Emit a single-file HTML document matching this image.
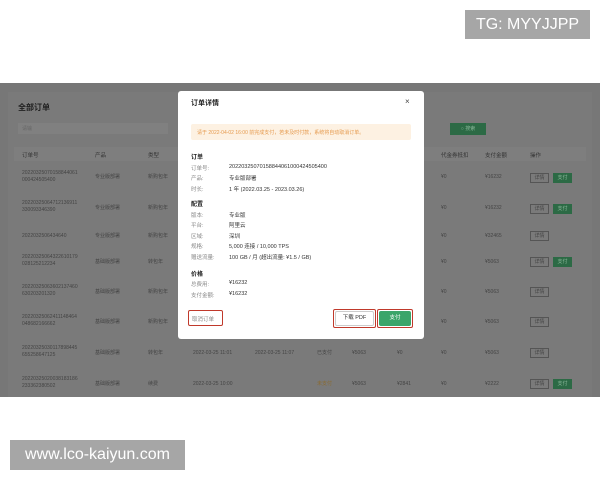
<!DOCTYPE html>
<html><head><meta charset="utf-8"><style>
*{margin:0;padding:0;box-sizing:border-box}
body{width:600px;height:480px;background:#fff;position:relative;overflow:hidden;font-family:"Liberation Sans","Noto Sans CJK SC",sans-serif}
.a{position:absolute;white-space:nowrap}
#bg{position:absolute;left:0;top:83px;width:600px;height:314px;background:#777}
#card{position:absolute;left:8px;top:92px;width:584px;height:305px;background:#7a7a7a}
.t{font-size:5px;color:#444;line-height:7px}
.h{font-size:5.5px;color:#333}
.btn{position:absolute;font-size:5px;height:10px;line-height:8px;text-align:center;border:1px solid #555;color:#444}
.pay{background:#2c6a45;border-color:#2c6a45;color:#8ab79a}
#m{position:absolute;left:178px;top:91px;width:246px;height:248px;background:#fff;border-radius:3px}
.l{font-size:5.5px;color:#888}
.v{font-size:5.5px;color:#333}
.s{font-size:6px;color:#222;font-weight:bold}
.red{position:absolute;border:1.5px solid #c0392b;border-radius:2px}
</style></head><body>
<div class="a" style="left:465px;top:10px;width:125px;height:29px;background:#a6a6a6;color:#fff;font-size:16px;line-height:29px;text-align:center">TG: MYYJJPP</div>
<div class="a" style="left:10px;top:440px;width:175px;height:30px;background:#a6a6a6;color:#fff;font-size:16px;line-height:30px;text-align:center">www.lco-kaiyun.com</div>
<div id="bg"></div><div id="card"></div>
<div class="a" style="left:18px;top:102px;font-size:8px;font-weight:bold;color:#222">全部订单</div>
<div class="a" style="left:18px;top:123px;width:150px;height:11px;background:#808080"></div>
<div class="a t" style="left:22px;top:126px;color:#666">请输</div>
<div class="a" style="left:450px;top:123px;width:36px;height:12px;background:#2c6a45;color:#8ab79a;font-size:5px;line-height:12px;text-align:center">○ 搜索</div>
<div class="a" style="left:14px;top:147px;width:572px;height:14px;background:#7e7e7e"></div>
<div class="a h" style="left:22px;top:151px">订单号</div>
<div class="a h" style="left:95px;top:151px">产品</div>
<div class="a h" style="left:148px;top:151px">类型</div>
<div class="a h" style="left:441px;top:151px">代金券抵扣</div>
<div class="a h" style="left:485px;top:151px">支付金额</div>
<div class="a h" style="left:530px;top:151px">操作</div>

<div class="a t" style="left:22px;top:170px">20220325070158844061<br>000424505400</div><div class="a t" style="left:95px;top:174px">专业版部署</div><div class="a t" style="left:148px;top:174px">新购包年</div><div class="a t" style="left:441px;top:174px">¥0</div><div class="a t" style="left:485px;top:174px">¥16232</div><div class="btn" style="left:530px;top:173px;width:19px">详情</div><div class="btn pay" style="left:553px;top:173px;width:19px">支付</div>
<div class="a t" style="left:22px;top:200px">20220325064712136911<br>330093346390</div><div class="a t" style="left:95px;top:205px">专业版部署</div><div class="a t" style="left:148px;top:205px">新购包年</div><div class="a t" style="left:441px;top:205px">¥0</div><div class="a t" style="left:485px;top:205px">¥16232</div><div class="btn" style="left:530px;top:204px;width:19px">详情</div><div class="btn pay" style="left:553px;top:204px;width:19px">支付</div>
<div class="a t" style="left:22px;top:233px">2022032506434640</div><div class="a t" style="left:95px;top:233px">专业版部署</div><div class="a t" style="left:148px;top:233px">新购包年</div><div class="a t" style="left:441px;top:233px">¥0</div><div class="a t" style="left:485px;top:233px">¥32465</div><div class="btn" style="left:530px;top:231px;width:19px">详情</div>
<div class="a t" style="left:22px;top:254px">20220325064322610179<br>028125212234</div><div class="a t" style="left:95px;top:259px">基础版部署</div><div class="a t" style="left:148px;top:259px">转包年</div><div class="a t" style="left:441px;top:259px">¥0</div><div class="a t" style="left:485px;top:259px">¥5063</div><div class="btn" style="left:530px;top:257px;width:19px">详情</div><div class="btn pay" style="left:553px;top:257px;width:19px">支付</div>
<div class="a t" style="left:22px;top:284px">20220325063602137460<br>630203201320</div><div class="a t" style="left:95px;top:289px">基础版部署</div><div class="a t" style="left:148px;top:289px">新购包年</div><div class="a t" style="left:441px;top:289px">¥0</div><div class="a t" style="left:485px;top:289px">¥5063</div><div class="btn" style="left:530px;top:287px;width:19px">详情</div>
<div class="a t" style="left:22px;top:314px">20220325062411148464<br>048682166662</div><div class="a t" style="left:95px;top:319px">基础版部署</div><div class="a t" style="left:148px;top:319px">新购包年</div><div class="a t" style="left:441px;top:319px">¥0</div><div class="a t" style="left:485px;top:319px">¥5063</div><div class="btn" style="left:530px;top:317px;width:19px">详情</div>
<div class="a t" style="left:22px;top:345px">20220325030117898445<br>655258647125</div><div class="a t" style="left:95px;top:350px">基础版部署</div><div class="a t" style="left:148px;top:350px">转包年</div><div class="a t" style="left:193px;top:350px">2022-03-25 11:01</div><div class="a t" style="left:255px;top:350px">2022-03-25 11:07</div><div class="a t" style="left:317px;top:350px">已支付</div><div class="a t" style="left:352px;top:350px">¥5063</div><div class="a t" style="left:397px;top:350px">¥0</div><div class="a t" style="left:441px;top:350px">¥0</div><div class="a t" style="left:485px;top:350px">¥5063</div><div class="btn" style="left:530px;top:348px;width:19px">详情</div>
<div class="a t" style="left:22px;top:376px">20220325020038183186<br>233362380502</div><div class="a t" style="left:95px;top:381px">基础版部署</div><div class="a t" style="left:148px;top:381px">续费</div><div class="a t" style="left:193px;top:381px">2022-03-25 10:00</div><div class="a t" style="left:317px;top:381px;color:#8a6a30">未支付</div><div class="a t" style="left:352px;top:381px">¥5063</div><div class="a t" style="left:397px;top:381px">¥2841</div><div class="a t" style="left:441px;top:381px">¥0</div><div class="a t" style="left:485px;top:381px">¥2222</div><div class="btn" style="left:530px;top:379px;width:19px">详情</div><div class="btn pay" style="left:553px;top:379px;width:19px">支付</div>

<div id="m"></div>
<div class="a" style="left:191px;top:98px;font-size:7px;font-weight:bold;color:#222">订单详情</div>
<div class="a" style="left:405px;top:97px;font-size:8px;color:#444">×</div>
<div class="a" style="left:191px;top:124px;width:220px;height:16px;background:#fdf1e2;border-radius:2px"></div>
<div class="a" style="left:197px;top:129px;font-size:5px;color:#e59a4e">请于 2022-04-02 16:00 前完成支付，若未及时付款，系统将自动取消订单。</div>
<div class="a s" style="left:191px;top:152px">订单</div>
<div class="a l" style="left:191px;top:164px">订单号:</div><div class="a v" style="left:229px;top:164px">20220325070158844061000424505400</div>
<div class="a l" style="left:191px;top:174px">产品:</div><div class="a v" style="left:229px;top:174px">专业版部署</div>
<div class="a l" style="left:191px;top:185px">时长:</div><div class="a v" style="left:229px;top:185px">1 年 (2022.03.25 - 2023.03.26)</div>
<div class="a s" style="left:191px;top:199px">配置</div>
<div class="a l" style="left:191px;top:211px">版本:</div><div class="a v" style="left:229px;top:211px">专业版</div>
<div class="a l" style="left:191px;top:221px">平台:</div><div class="a v" style="left:229px;top:221px">阿里云</div>
<div class="a l" style="left:191px;top:232px">区域:</div><div class="a v" style="left:229px;top:232px">深圳</div>
<div class="a l" style="left:191px;top:242px">规格:</div><div class="a v" style="left:229px;top:242px">5,000 连接 / 10,000 TPS</div>
<div class="a l" style="left:191px;top:253px">赠送流量:</div><div class="a v" style="left:229px;top:253px">100 GB / 月 (超出流量: ¥1.5 / GB)</div>
<div class="a s" style="left:191px;top:269px">价格</div>
<div class="a l" style="left:191px;top:280px">总费用:</div><div class="a v" style="left:229px;top:280px">¥16232</div>
<div class="a l" style="left:191px;top:291px">支付金额:</div><div class="a v" style="left:229px;top:291px">¥16232</div>
<div class="red" style="left:188px;top:310px;width:35px;height:16px"></div>
<div class="a l" style="left:192px;top:315px">取消订单</div>
<div class="red" style="left:333px;top:309px;width:43px;height:19px"></div>
<div class="a" style="left:335px;top:311px;width:39px;height:15px;border:1px solid #ccc;border-radius:2px;font-size:5.5px;line-height:13px;text-align:center;color:#333">下载 PDF</div>
<div class="red" style="left:377px;top:309px;width:36px;height:19px"></div>
<div class="a" style="left:379px;top:311px;width:32px;height:15px;background:#3aa56a;border-radius:2px;font-size:5.5px;line-height:15px;text-align:center;color:#fff">支付</div>
</body></html>
